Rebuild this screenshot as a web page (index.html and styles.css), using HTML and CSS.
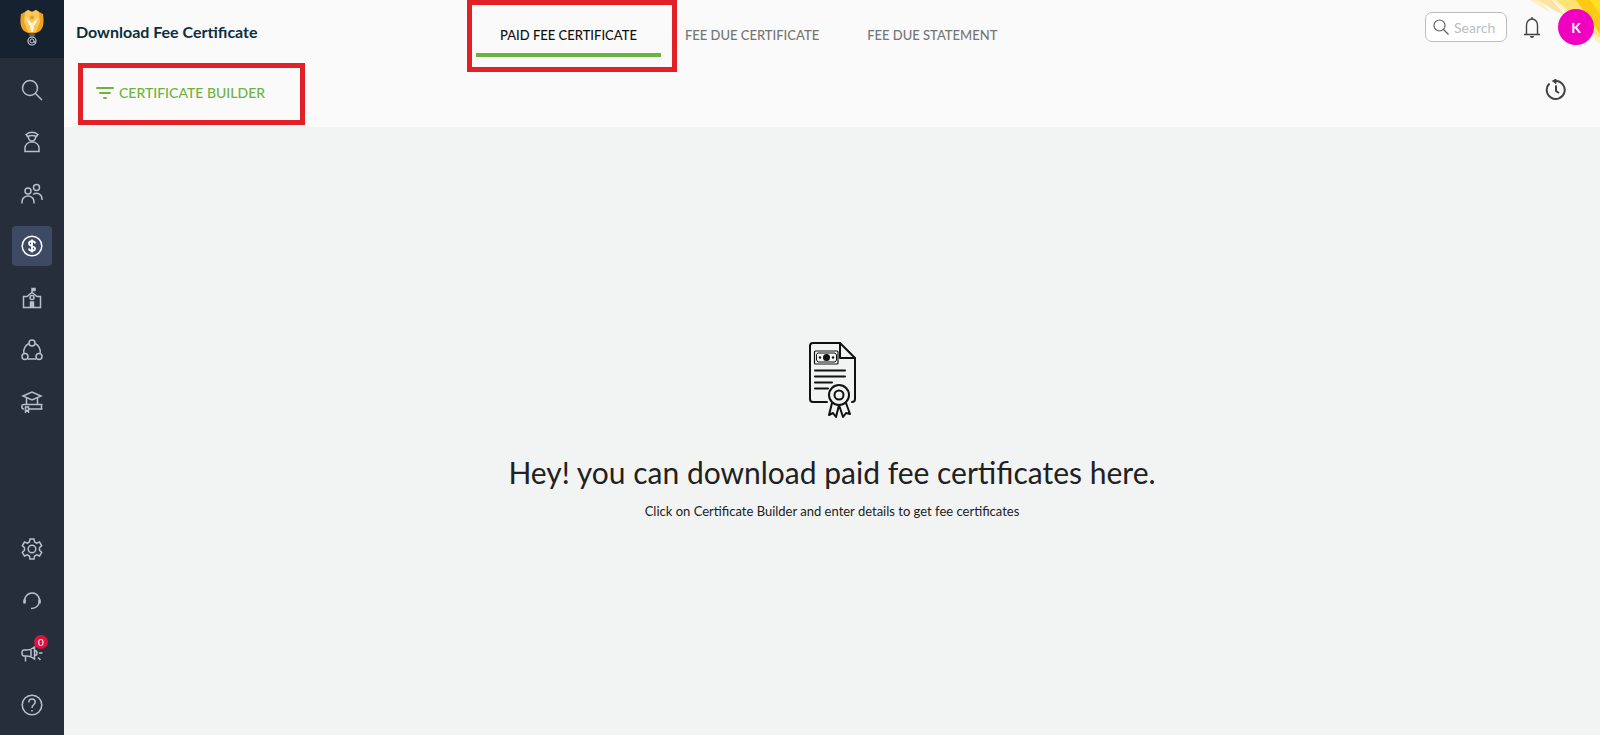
FILE: index.html
```html
<!DOCTYPE html>
<html lang="en">
<head>
    <meta charset="UTF-8">
    <meta name="viewport" content="width=device-width, initial-scale=1.0">
    <title>Download Fee Certificate</title>
    <link rel="stylesheet" href="styles.css">
</head>
<body>
    <aside class="sidebar">
        <a class="logo" href="#" aria-label="Home">
            <svg width="26" height="38" viewBox="0 0 26 38">
                <path d="M2 5 L6 3 L9 1 L13 3 L17 1 L20 3 L24 5 C25 12 25 18 21 22 Q13 27 5 22 C1 18 1 12 2 5Z" fill="#f0a21e"/>
                <path d="M6 3 L9 1 L13 3 L17 1 L20 3 L21 13 L17 23 L9 23 L5 13Z" fill="#fbc65a"/>
                <path d="M7 7 Q9 12 13 14 Q17 12 19 7 Q18 14 15 17 L14 23 H12 L11 17 Q8 14 7 7Z" fill="#fff6d8"/>
                <circle cx="13" cy="8.500" r="2" fill="#e99a2c"/>
                <path d="M10 26 H16 M11 28 H15" stroke="#8a929c" stroke-width="1"/>
                <circle cx="13" cy="32" r="4" fill="none" stroke="#c3cad2" stroke-width="1.2"/>
                <path d="M11 32 a2 2 0 1 1 4 0 v1 q1 1 2 0 M11 32 a2 2 0 0 0 4 0" fill="none" stroke="#c3cad2"/>
            </svg>
        </a>

        <nav class="menu">
            <a class="menu-item" href="#" aria-label="Search">
                <svg viewBox="0 0 22 22"><circle cx="9" cy="9" r="7.5"/><path d="M14.5 14.5 L21 21"/></svg>
            </a>
            <a class="menu-item" href="#" aria-label="Students">
                <svg viewBox="0 0 22 22"><path d="M5 3.500 Q11 -1 17 3.500 L15.500 5.500 Q11 3.500 6.500 5.500Z"/><path d="M7.500 5.500 V6.500 a3.500 3.500 0 0 0 7 0 V5.500"/><path d="M4 20.500 V17.500 C4 13.500 7 11 11 11 S18 13.500 18 17.500 V20.500Z"/></svg>
            </a>
            <a class="menu-item" href="#" aria-label="Groups">
                <svg viewBox="0 0 22 22"><circle cx="7" cy="8" r="3"/><circle cx="15.500" cy="4.500" r="3"/><path d="M1 20.500 V18.500 a6 5.500 0 0 1 12 0 V20.500"/><path d="M12 11.500 C16 8.500 21 11.500 21 16 V17"/></svg>
            </a>
            <a class="menu-item active" href="#" aria-label="Fees">
                <svg viewBox="0 0 22 22"><circle cx="11" cy="11" r="9.800"/><path stroke-width="1.8" d="M14 8.500 C14 5.500 8 5.500 8 8.500 S14 10.500 14 13.500 S8 16.500 8 13.500 M11 4.500 V17.500"/></svg>
            </a>
            <a class="menu-item" href="#" aria-label="School">
                <svg viewBox="0 0 22 22"><path d="M2.500 20.500 V9.500 H6 L11 5.500 L16 9.500 H19.500 V20.500Z"/><circle cx="11" cy="10.500" r="2"/><path d="M11 5.500 V1.500 H14 V3.500 H11" fill="currentColor"/><path d="M9.500 20 V15 H12.500 V20Z" fill="currentColor"/></svg>
            </a>
            <a class="menu-item" href="#" aria-label="Network">
                <svg viewBox="0 0 22 22"><circle cx="11" cy="4" r="3"/><circle cx="4" cy="17.500" r="3"/><circle cx="18" cy="17.500" r="3"/><path d="M8 4.500 C4 6 2 11 3 14.500 M14 4.500 C18 6 20 11 19 14.500 M7 20 H15"/></svg>
            </a>
            <a class="menu-item" href="#" aria-label="Courses">
                <svg viewBox="0 0 22 22"><path d="M2 5 L11 1 L20 5 L11 9Z"/><path d="M5.500 7 V13 M16.500 7 V13"/><path d="M21.500 13.500 H3 a2.200 2.200 0 0 0 0 4.400 M8 18 H21.500 M20.500 13.500 V18 M4.500 16 V21 L6 19.500 L7.500 21 V16Z"/></svg>
            </a>
        </nav>

        <nav class="menu menu-bottom">
            <a class="menu-item" href="#" aria-label="Settings">
                <svg viewBox="0 0 22 22"><circle cx="11" cy="11" r="3.800"/><path d="M9 1 H13 L13.600 4 L15.700 5.200 L18.500 4 L20.700 7.600 L18.500 9.800 V12.200 L20.700 14.400 L18.500 18 L15.700 16.800 L13.600 18 L13 21 H9 L8.400 18 L6.300 16.800 L3.500 18 L1.300 14.400 L3.500 12.200 V9.800 L1.300 7.600 L3.500 4 L6.300 5.200 L8.400 4Z"/></svg>
            </a>
            <a class="menu-item" href="#" aria-label="Support">
                <svg viewBox="0 0 22 22"><path d="M4 13 A7.500 7.500 0 1 1 18 13.500 C16.500 17 14 18.500 10 18.500"/><path stroke-width="2.500" d="M3.500 9.500 V13.500 M18.500 9.500 V13.500"/></svg>
            </a>
            <a class="menu-item" href="#" aria-label="Announcements">
                <svg viewBox="0 0 22 22"><path d="M3 8 H6 C9 8 11 7 13.500 5 V17 C11 15 9 14 6 14 H3 Q1 14 1 11 Q1 8 3 8Z M4.500 14 V19.500 M13.500 8.500 Q16 8.500 16 11 T13.500 13.500 M18 11 H21.500 M17 15.500 L19.500 18 M10 8 V14"/></svg>
                <span class="badge">0</span>
            </a>
            <a class="menu-item" href="#" aria-label="Help">
                <svg viewBox="0 0 22 22"><circle cx="11" cy="11" r="9.800"/><path d="M7.800 8.500 C7.800 3.500 14.200 4 14.200 8 C14.200 11 11 10.500 11 14 M11 16 V17.500"/></svg>
            </a>
        </nav>
    </aside>

    <div class="page">
        <header class="header">
            <svg class="corner" width="72" height="48" viewBox="0 0 72 48">
                <path d="M24 0 H72 V44 L58 31Z" fill="#fff0bd"/>
                <path d="M2 0 H12 L22 12 L16 9Z" fill="#fff0bd"/>
                <path d="M10 0 H24 L36 14 L29 12Z" fill="#fbe3a4"/>
                <path d="M28 0 H72 V38Z" fill="#ffe372"/>
                <path d="M48 0 H72 V34Z" fill="#fdca13"/>
                <path d="M62 0 H72 V14Z" fill="#ffdf21"/>
            </svg>
            <h1 class="title">Download Fee Certificate</h1>
            <nav class="tabs">
                <a class="tab active" href="#">PAID FEE CERTIFICATE</a>
                <a class="tab" href="#">FEE DUE CERTIFICATE</a>
                <a class="tab" href="#">FEE DUE STATEMENT</a>
            </nav>
            <div class="actions">
                <label class="search">
                    <svg width="16" height="16" viewBox="0 0 16 16"><circle cx="6.500" cy="6.500" r="5.500"/><path d="M10.500 10.500 L15.500 15.500"/></svg>
                    <input type="text" placeholder="Search" aria-label="Search">
                </label>
                <button class="icon-btn" aria-label="Notifications">
                    <svg width="18" height="22" viewBox="0 0 18 22"><path d="M3.500 18 V9 a5.500 6 0 0 1 11 0 V18 M1 18.500 H17 M9 3 V1"/><path d="M7 20 a2 2 0 0 0 4 0Z" fill="currentColor" stroke="none"/></svg>
                </button>
                <button class="avatar">K</button>
            </div>
        </header>

        <div class="toolbar">
            <button class="builder">
                <svg width="18" height="14" viewBox="0 0 18 14"><path d="M1 3 H17 M4 8 H14 M8 13 H10"/></svg>
                CERTIFICATE BUILDER
            </button>
            <button class="icon-btn history" aria-label="History">
                <svg width="22" height="22" viewBox="0 0 22 22"><path d="M4.500 4.500 A9 9 0 1 0 11 2 H8.500 M11 6.500 V12 L14 14"/><path d="M11 0 L7.500 2 L11 4.500Z" fill="currentColor" stroke-width="1"/></svg>
            </button>
        </div>

        <main class="empty">
            <svg class="certificate" width="50" height="78" viewBox="0 0 50 78">
                <!-- Paper with folded corner -->
                <path d="M20 60 H6 Q3 60 3 57 V4 Q3 1 6 1 H33 L48 16 V57 Q48 60 45 60"/>
                <path d="M33 1 V16 H48"/>
                <!-- Bank note -->
                <rect x="7.500" y="9" width="23.500" height="13" rx="1" stroke-width="1.200"/>
                <path d="M11 11 H28 L29.500 13 V18 L28 20 H11 L9.500 18 V13Z" stroke-width="1"/>
                <circle class="solid" cx="19.500" cy="15.500" r="3.500"/>
                <circle class="solid" cx="13" cy="15.500" r="1.200"/>
                <circle class="solid" cx="26" cy="15.500" r="1.200"/>
                <!-- Text lines -->
                <path d="M8 28.500 H38 M8 34.500 H38 M8 40.500 H25 M8 46.500 H21"/>
                <!-- Rosette -->
                <path d="M25 61 L22 73 L26 71 L29 75 L32 63 M39 61 L43 72 L39 71 L36 75 L32 63"/>
                <circle cx="32" cy="53" r="10"/>
                <circle cx="32" cy="53" r="4.500"/>
            </svg>
            <h2 class="empty-title">Hey! you can download paid fee certificates here.</h2>
            <p class="empty-text">Click on Certificate Builder and enter details to get fee certificates</p>
        </main>
    </div>
</body>
</html>
```
FILE: styles.css
```css
* { box-sizing: border-box; }

body {
    margin: 0;
    min-height: 100vh;
    display: flex;
    font-family: Lato, "Open Sans", sans-serif;
    color: #212121;
    background: #f2f4f4;
}

a {
    color: inherit;
    text-decoration: none;
}

button {
    font: inherit;
    border: none;
    background: none;
    padding: 0;
    cursor: pointer;
}

svg {
    display: block;
    flex-shrink: 0;
}

/* Sidebar */
.sidebar {
    width: 64px;
    flex-shrink: 0;
    display: flex;
    flex-direction: column;
    background: #262d3b;
}

.logo {
    height: 58px;
    padding-top: 9px;
    display: flex;
    justify-content: center;
    background: #172230;
}

.menu {
    display: flex;
    flex-direction: column;
    align-items: center;
    gap: 12px;
    padding: 12px 0 10px;
}

.menu-bottom {
    margin-top: auto;
}

.menu-item {
    position: relative;
    width: 40px;
    height: 40px;
    display: flex;
    align-items: center;
    justify-content: center;
    border-radius: 4px;
    color: #b6c0cc;
}

.menu-item svg {
    width: 22px;
    height: 22px;
    fill: none;
    stroke: currentColor;
    stroke-width: 1.5;
}

.menu-item.active {
    background: #3e4a63;
    color: #fff;
}

.badge {
    position: absolute;
    top: 2px;
    right: 4px;
    width: 14px;
    height: 14px;
    border-radius: 50%;
    background: #dc143c;
    color: #fff;
    font-size: 10px;
    line-height: 14px;
    text-align: center;
}

/* Header */
.page {
    flex: 1;
    min-width: 0;
    display: flex;
    flex-direction: column;
}

.header {
    position: relative;
    height: 64px;
    display: grid;
    grid-template-columns: 400px 1fr auto;
    padding: 0 6px 0 12px;
    background: #fafafa;
}

.corner {
    position: absolute;
    top: 0;
    right: 0;
}

.title {
    margin: 0;
    font-size: 16px;
    font-weight: 700;
    line-height: 64px;
    color: #0b2e40;
}

.tabs {
    display: flex;
    align-items: flex-start;
}

.tab {
    position: relative;
    height: 57px;
    padding: 13px 24px 0;
    border-bottom: 4px solid transparent;
    font-size: 13px;
    font-weight: 500;
    line-height: 44px;
    white-space: nowrap;
    color: #757575;
}

.tab.active {
    color: #111;
    border-bottom-color: #6cb33f;
}

/* Callout frames */
.tab.active::after,
.builder::after {
    content: '';
    position: absolute;
    border: 5px solid #e02128;
}

.tab.active::after {
    inset: 0 -16px -19px -9px;
}

.actions {
    position: relative;
    display: flex;
    align-items: center;
    height: 54px;
}

.search {
    width: 82px;
    height: 30px;
    padding: 0 7px;
    display: flex;
    align-items: center;
    gap: 5px;
    border: 1px solid #bdbdbd;
    border-radius: 7px;
    background: #fff;
}

.search svg {
    fill: none;
    stroke: #616161;
    stroke-width: 1.2;
}

.search input {
    width: 100%;
    min-width: 0;
    padding: 0;
    border: none;
    outline: none;
    background: none;
    font: inherit;
    font-size: 14px;
}

.search input::placeholder {
    color: #bdbdbd;
}

.icon-btn {
    color: #424242;
}

.icon-btn svg {
    fill: none;
    stroke: currentColor;
    stroke-width: 1.4;
}

.actions .icon-btn {
    margin: 0 17px 0 16px;
}

.avatar {
    width: 36px;
    height: 36px;
    border-radius: 50%;
    background: #f000c0;
    color: #fff;
    font-size: 14px;
    font-weight: 700;
}

/* Toolbar */
.toolbar {
    height: 63px;
    padding: 0 33px 0 32px;
    display: flex;
    align-items: flex-start;
    justify-content: space-between;
    background: #fafafa;
}

.builder {
    position: relative;
    display: flex;
    align-items: center;
    gap: 5px;
    height: 56px;
    font-size: 14px;
    font-weight: 500;
    color: #6cb33f;
}

.builder::after {
    inset: -1px -40px -5px -18px;
}

.builder svg {
    stroke: currentColor;
    stroke-width: 2;
    stroke-linecap: round;
}

.history {
    height: 52px;
}

.history svg {
    stroke-width: 2;
}

/* Empty state */
.empty {
    flex: 1;
    display: flex;
    flex-direction: column;
    align-items: center;
    justify-content: center;
}

.certificate {
    fill: none;
    stroke: #111;
    stroke-width: 2;
    stroke-linecap: round;
    stroke-linejoin: round;
}

.certificate .solid {
    fill: #111;
    stroke: none;
}

.empty-title {
    margin: 32px 0 9px;
    font-size: 30px;
    font-weight: 400;
    line-height: 40px;
}

.empty-text {
    margin: 0;
    font-size: 13px;
    line-height: 20px;
}
```
